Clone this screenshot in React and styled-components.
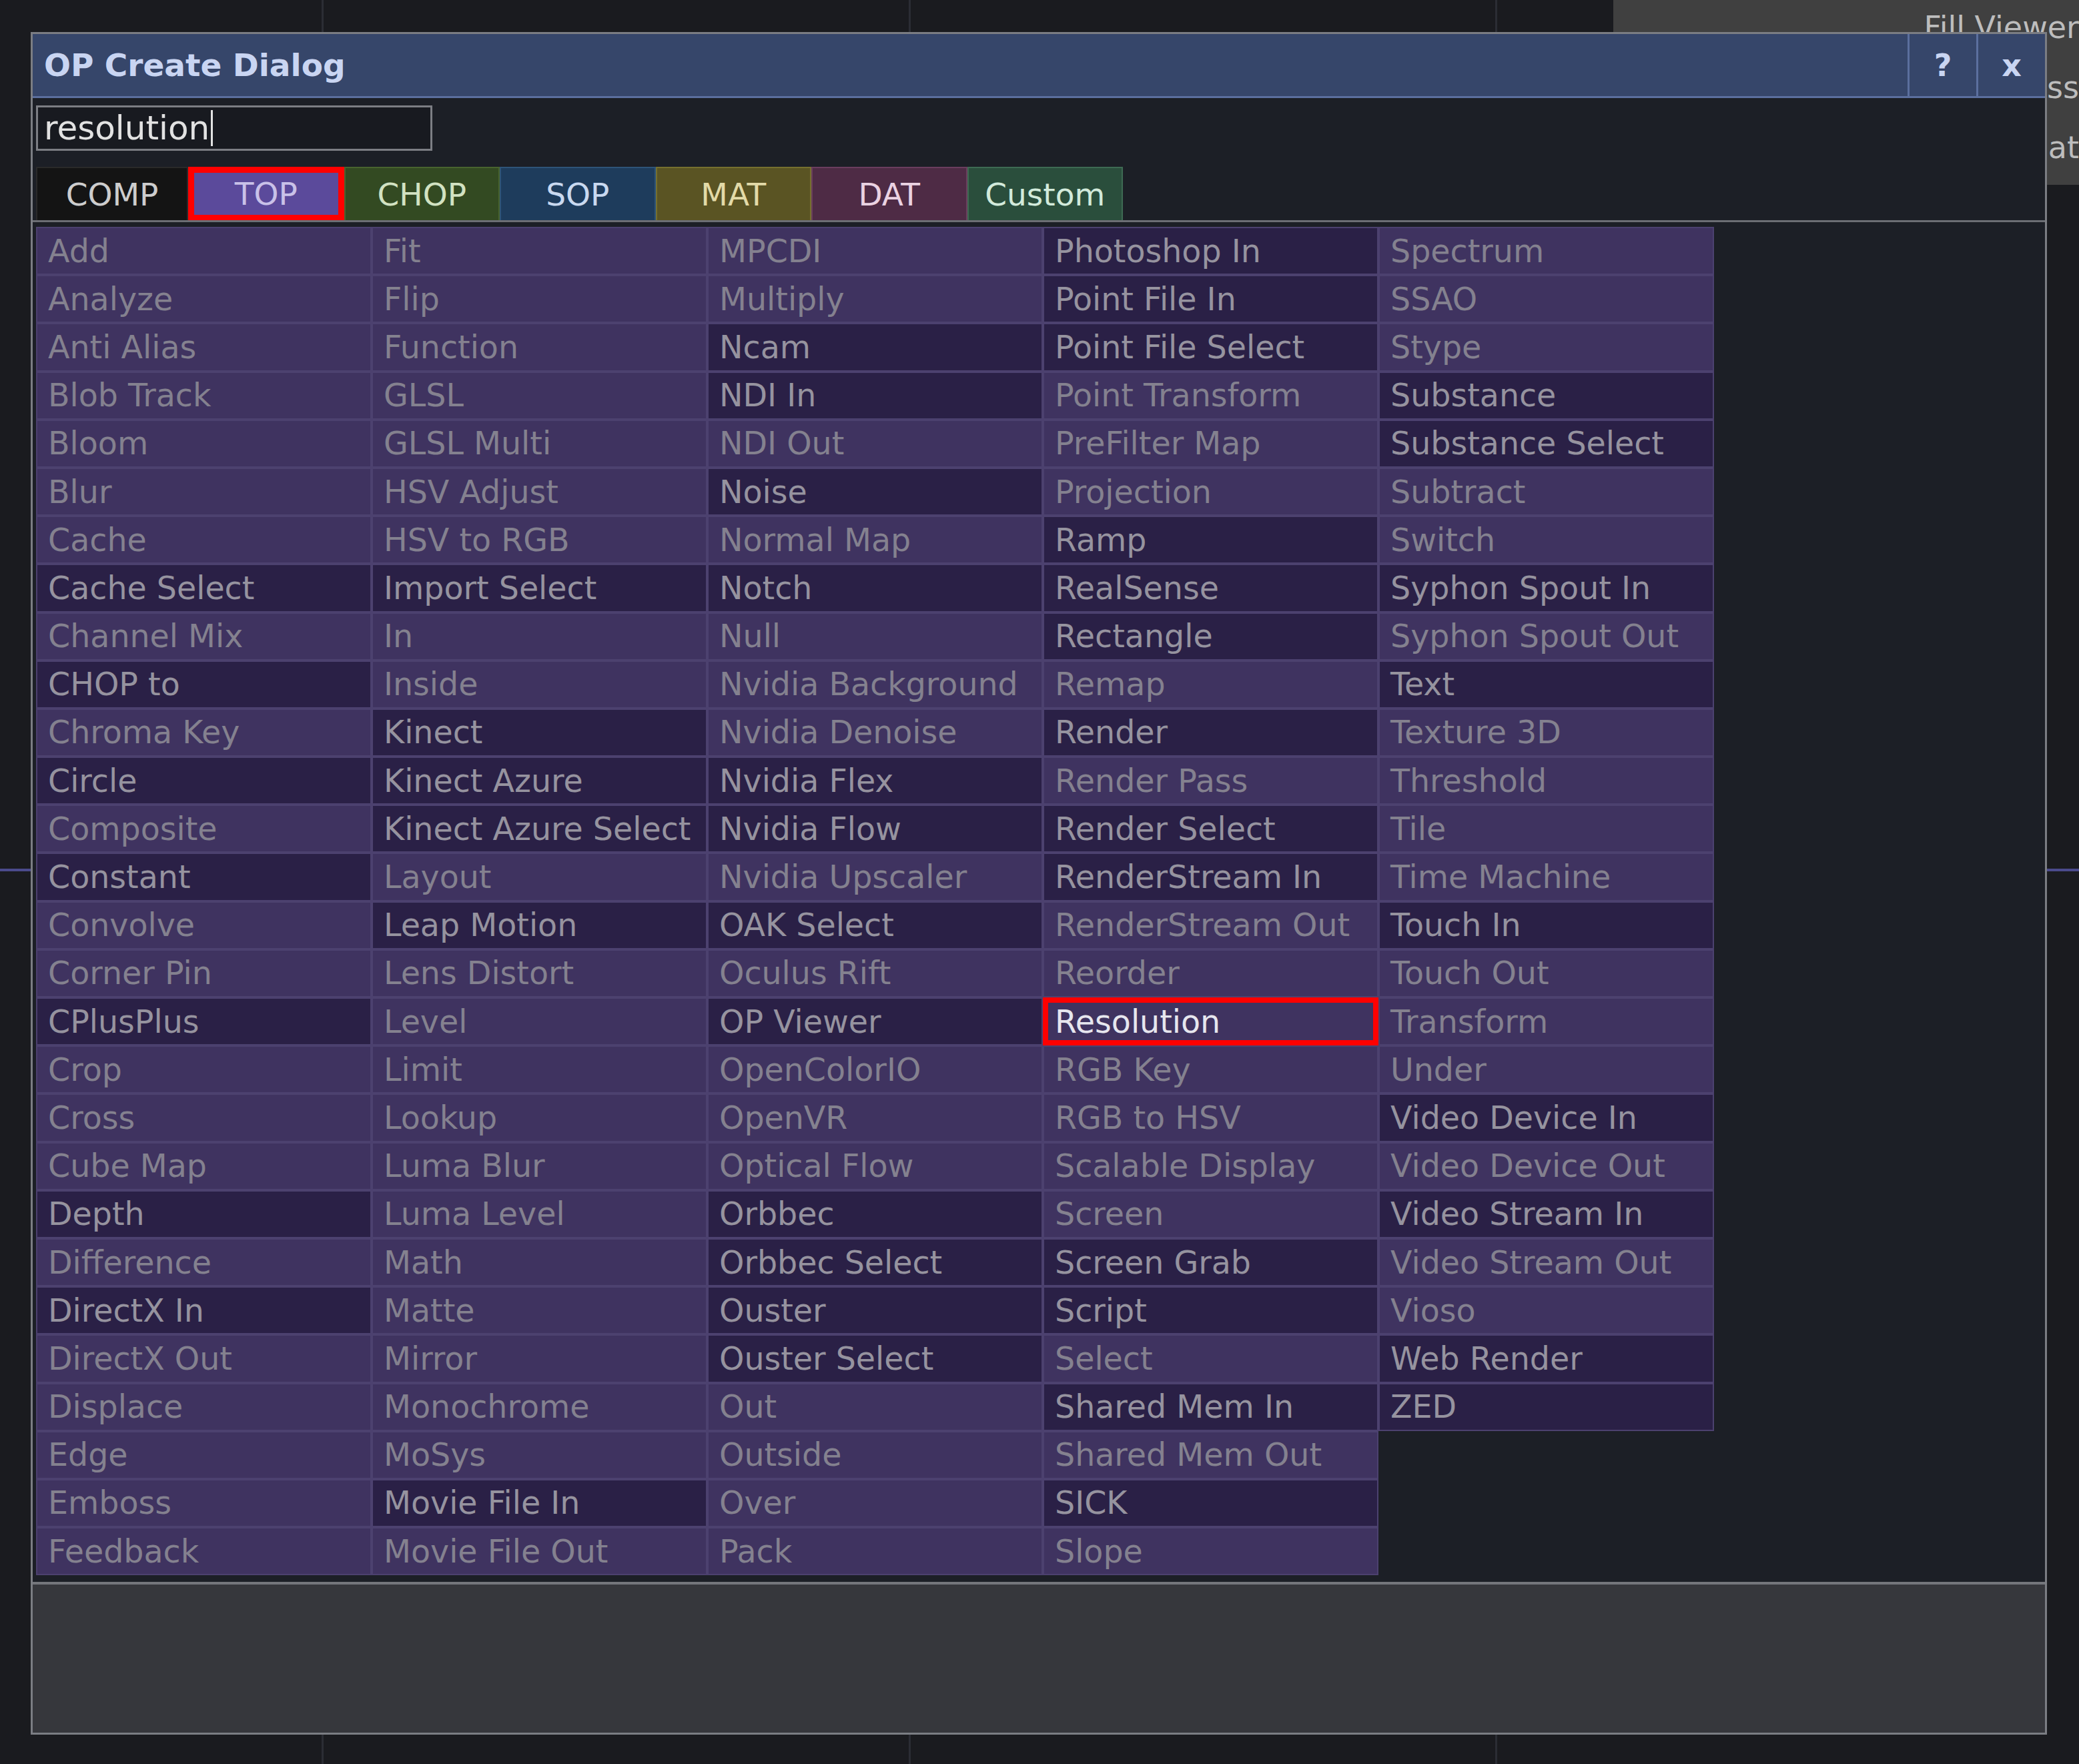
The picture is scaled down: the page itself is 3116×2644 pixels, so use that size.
import React from "react";
import styled, { createGlobalStyle, css } from "styled-components";

const GlobalStyle = createGlobalStyle`
  html, body {
    margin: 0;
    padding: 0;
    background: #1a1b1f;
  }
  body {
    font-family: "DejaVu Sans", Verdana, sans-serif;
  }
  #root {
    width: 3116px;
    height: 2644px;
    overflow: hidden;
  }
`;

const FAMILIES = [
  { label: "COMP", bg: "#141414", edge: "#2a2a2a", fg: "#cdcdcd", width: 228 },
  { label: "TOP", bg: "#5b4a9b", edge: "#6f5fb2", fg: "#c9c1e8", marked: true },
  { label: "CHOP", bg: "#334a22", edge: "#48632f", fg: "#d2e2c2" },
  { label: "SOP", bg: "#1e3c5c", edge: "#2e5478", fg: "#c9d9f0" },
  { label: "MAT", bg: "#5a5423", edge: "#76702f", fg: "#e2daa8" },
  { label: "DAT", bg: "#4e2b45", edge: "#6a3e5e", fg: "#ead2e2" },
  { label: "Custom", bg: "#2a4e3c", edge: "#3e6a53", fg: "#d2eadb" },
];

// "*" = dimmed (darker) operator, "!" = highlighted operator
const COLUMNS = [
  ["Add", "Analyze", "Anti Alias", "Blob Track", "Bloom", "Blur", "Cache", "*Cache Select", "Channel Mix", "*CHOP to", "Chroma Key", "*Circle", "Composite", "*Constant", "Convolve", "Corner Pin", "*CPlusPlus", "Crop", "Cross", "Cube Map", "*Depth", "Difference", "*DirectX In", "DirectX Out", "Displace", "Edge", "Emboss", "Feedback"],
  ["Fit", "Flip", "Function", "GLSL", "GLSL Multi", "HSV Adjust", "HSV to RGB", "*Import Select", "In", "Inside", "*Kinect", "*Kinect Azure", "*Kinect Azure Select", "Layout", "*Leap Motion", "Lens Distort", "Level", "Limit", "Lookup", "Luma Blur", "Luma Level", "Math", "Matte", "Mirror", "Monochrome", "MoSys", "*Movie File In", "Movie File Out"],
  ["MPCDI", "Multiply", "*Ncam", "*NDI In", "NDI Out", "*Noise", "Normal Map", "*Notch", "Null", "Nvidia Background", "Nvidia Denoise", "*Nvidia Flex", "*Nvidia Flow", "Nvidia Upscaler", "*OAK Select", "Oculus Rift", "*OP Viewer", "OpenColorIO", "OpenVR", "Optical Flow", "*Orbbec", "*Orbbec Select", "*Ouster", "*Ouster Select", "Out", "Outside", "Over", "Pack"],
  ["*Photoshop In", "*Point File In", "*Point File Select", "Point Transform", "PreFilter Map", "Projection", "*Ramp", "*RealSense", "*Rectangle", "Remap", "*Render", "Render Pass", "*Render Select", "*RenderStream In", "RenderStream Out", "Reorder", "!Resolution", "RGB Key", "RGB to HSV", "Scalable Display", "Screen", "*Screen Grab", "*Script", "Select", "*Shared Mem In", "Shared Mem Out", "*SICK", "Slope"],
  ["Spectrum", "SSAO", "Stype", "*Substance", "*Substance Select", "Subtract", "Switch", "*Syphon Spout In", "Syphon Spout Out", "*Text", "Texture 3D", "Threshold", "Tile", "Time Machine", "*Touch In", "Touch Out", "Transform", "Under", "*Video Device In", "Video Device Out", "*Video Stream In", "Video Stream Out", "Vioso", "*Web Render", "*ZED"],
];

const ROWS = 28;

const App = () => {
  return (
    <>
      <GlobalStyle />
      <Workspace>
        <ParamPanel>
          <ParamLine>Fill Viewer</ParamLine>
          <ParamLine>Bypass</ParamLine>
          <ParamLine>Format</ParamLine>
        </ParamPanel>

        <Dialog>
          <TitleBar>
            <Title>OP Create Dialog</Title>
            <TitleButton>?</TitleButton>
            <TitleButton>x</TitleButton>
          </TitleBar>

          <SearchRow>
            <SearchBox>
              resolution
              <Caret />
            </SearchBox>
          </SearchRow>

          <TabRow>
            {FAMILIES.map((f) => (
              <Tab
                key={f.label}
                $bg={f.bg}
                $edge={f.edge}
                $fg={f.fg}
                $width={f.width}
                $marked={f.marked}
              >
                {f.label}
              </Tab>
            ))}
          </TabRow>

          <OpArea>
            <OpGrid>
              {COLUMNS.map((col, ci) =>
                col.map((raw, ri) => {
                  const dark = raw.startsWith("*");
                  const hot = raw.startsWith("!");
                  const name = dark || hot ? raw.slice(1) : raw;
                  return (
                    <OpCell
                      key={name}
                      $dark={dark}
                      $hot={hot}
                      style={{ gridColumn: ci + 1, gridRow: ri + 1 }}
                    >
                      {name}
                    </OpCell>
                  );
                })
              )}
            </OpGrid>
          </OpArea>

          <InfoPanel />
        </Dialog>
      </Workspace>
    </>
  );
};

const Workspace = styled.div`
  position: relative;
  width: 3116px;
  height: 2644px;
  display: grid;
  grid-template-columns: 1fr;
  align-items: start;
  background-color: #1a1b1f;
  background-image:
    linear-gradient(to right,
      transparent 482px, #2b2d34 482px, #2b2d34 485px,
      transparent 485px, transparent 1362px, #2b2d34 1362px, #2b2d34 1365px,
      transparent 1365px, transparent 2241px, #2b2d34 2241px, #2b2d34 2244px,
      transparent 2244px),
    linear-gradient(to bottom,
      transparent 1302px, #4b4b8c 1302px, #4b4b8c 1306px, transparent 1306px);
`;

const ParamPanel = styled.div`
  justify-self: end;
  width: 698px;
  height: 277px;
  box-sizing: border-box;
  background: #404040;
  display: flex;
  flex-direction: column;
  align-items: flex-end;
  padding-top: 14px;
  gap: 36px;
`;

const ParamLine = styled.div`
  font-size: 46px;
  line-height: 54px;
  color: #bdbdbd;
  white-space: nowrap;
`;

const Dialog = styled.div`
  position: absolute;
  left: 46px;
  top: 48px;
  width: 3022px;
  height: 2552px;
  box-sizing: border-box;
  border: 3px solid #7b7d83;
  background: #1c1f26;
  display: flex;
  flex-direction: column;
`;

const TitleBar = styled.div`
  height: 96px;
  box-sizing: border-box;
  display: flex;
  align-items: stretch;
  background: #36466a;
  border-bottom: 3px solid #5b6f9e;
`;

const Title = styled.div`
  flex: 1;
  display: flex;
  align-items: center;
  padding-left: 17px;
  font-weight: bold;
  font-size: 47px;
  color: #c9d5f2;
`;

const TitleButton = styled.div`
  width: 100px;
  display: flex;
  align-items: center;
  justify-content: center;
  border-left: 3px solid #5b6f9e;
  font-weight: bold;
  font-size: 46px;
  color: #c9d5f2;
`;

const SearchRow = styled.div`
  display: flex;
  padding: 11px 0 0 5px;
`;

const SearchBox = styled.div`
  width: 594px;
  height: 68px;
  box-sizing: border-box;
  border: 3px solid #7c7e84;
  background: #181a20;
  display: flex;
  align-items: center;
  padding-left: 9px;
  font-size: 50px;
  color: #e2e2e2;
`;

const Caret = styled.span`
  width: 3px;
  height: 54px;
  margin-left: 2px;
  background: #e2e2e2;
`;

const TabRow = styled.div`
  display: flex;
  margin-top: 24px;
  padding-left: 5px;
  border-bottom: 3px solid #6c6e74;
`;

const Tab = styled.div`
  width: ${(p) => p.$width || 233.5}px;
  height: 80px;
  box-sizing: border-box;
  display: flex;
  align-items: center;
  justify-content: center;
  background: ${(p) => p.$bg};
  border: 2px solid ${(p) => p.$edge};
  border-bottom: none;
  color: ${(p) => p.$fg};
  font-size: 47px;
  ${(p) =>
    p.$marked &&
    css`
      border: 9px solid #ff0000;
      border-bottom-width: 8px;
    `}
`;

const OpArea = styled.div`
  flex: 1;
  padding: 7px 0 0 5px;
`;

const OpGrid = styled.div`
  display: grid;
  grid-template-columns: repeat(5, 503px);
  grid-template-rows: repeat(${ROWS}, 72.2px);
`;

const OpCell = styled.div`
  box-sizing: border-box;
  display: flex;
  align-items: center;
  padding-left: 16px;
  background: ${(p) => (p.$dark ? "#2a2046" : "#3f3360")};
  border: 2px solid #4c416f;
  color: ${(p) => (p.$hot ? "#e6e6ee" : p.$dark ? "#96939f" : "#84818f")};
  font-size: 47.5px;
  white-space: nowrap;
  overflow: hidden;
  ${(p) =>
    p.$hot &&
    css`
      border: 8px solid #ff0000;
      padding-left: 10px;
    `}
`;

const InfoPanel = styled.div`
  height: 226px;
  margin-top: 9px;
  box-sizing: border-box;
  border-top: 4px solid #74767c;
  background: #36373c;
`;

export default App;
